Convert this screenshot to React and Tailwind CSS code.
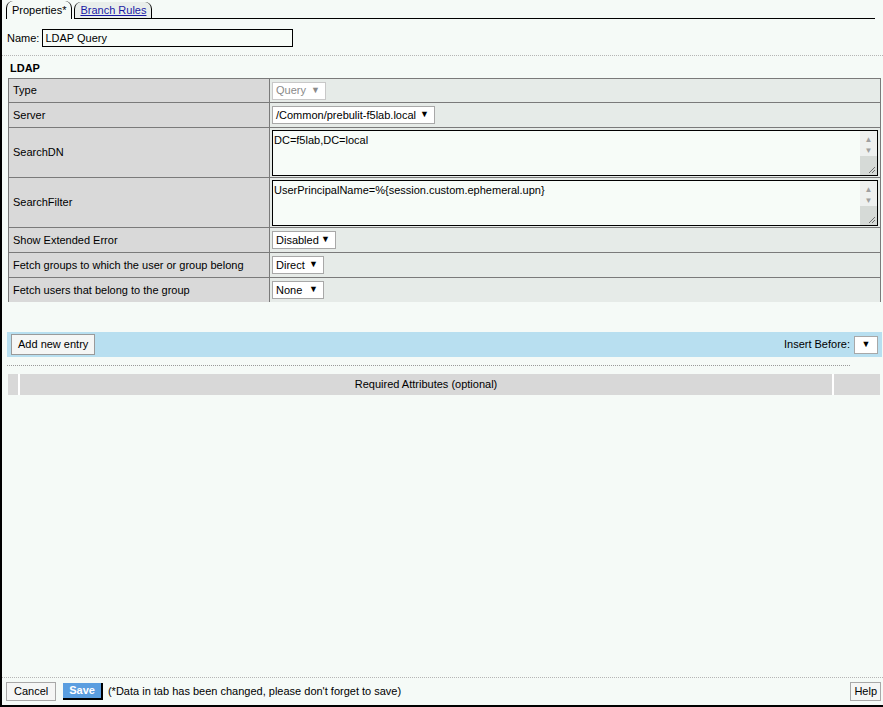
const font = { fontFamily: '"Liberation Sans", Arial, sans-serif' };

function Select({ value, width, disabled }) {
  return (
    <div
      className={`flex h-[18px] items-center justify-between whitespace-nowrap border bg-white pl-[3px] pr-[5px] ${
        disabled ? "border-[#c8c8c8] text-[#8a8a8a]" : "border-[#a8a8a8] text-black"
      } ${width}`}
    >
      <span>{value}</span>
      <span className={`text-[9px] ${disabled ? "text-[#8a8a8a]" : "text-black"}`}>▼</span>
    </div>
  );
}

function FakeTextarea({ text }) {
  return (
    <div className="flex h-[46px] flex-1 border border-black bg-[#f7fcf8]">
      <div className="flex-1 pl-[1px] pt-[2px] leading-[14px]">{text}</div>
      <div className="flex w-[17px] flex-col">
        <div className="flex flex-col items-center bg-[#eef0ef] pt-[3px] text-[8px] leading-[11px] text-[#a0a0a0]">
          <span>▲</span>
          <span>▼</span>
        </div>
        <div className="relative flex-1 bg-[#d6dad7]">
          <svg className="absolute bottom-[1px] right-[1px]" width="8" height="8" viewBox="0 0 8 8">
            <path d="M7 1 L1 7 M7 4 L4 7" stroke="#707070" strokeWidth="1" fill="none" />
          </svg>
        </div>
      </div>
    </div>
  );
}

function Row({ label, height, children, last }) {
  return (
    <div className={`flex ${height} ${last ? "" : "border-b border-[#7a7a7a]"}`}>
      <div className="flex w-[261px] items-center whitespace-nowrap border-r border-[#7a7a7a] bg-[#d9d9d9] pl-[4px]">{label}</div>
      <div className="flex flex-1 items-center bg-[#e6ebe8] px-[2px]">{children}</div>
    </div>
  );
}

export default function App() {
  return (
    <div
      style={font}
      className="flex h-[707px] w-[883px] flex-col border-b-2 border-l-2 border-black bg-[#f5faf7] text-[11px] text-black"
    >
      {/* tabs */}
      <div className="flex h-[19px] items-end pl-[4px] pr-[8px]">
        <div className="flex h-[18px] items-center rounded-t-[7px] border-x border-black px-[5px]">Properties*</div>
        <div className="ml-[2px] flex flex-1 items-end border-b border-black">
          <div className="flex h-[16px] items-center rounded-t-[7px] border-x border-black bg-[#e9eeeb] px-[5px] text-[#1a1aa6] underline">
            Branch Rules
          </div>
        </div>
      </div>

      {/* name */}
      <div className="mt-[10px] flex items-center gap-[3px] pl-[5px]">
        <span>Name:</span>
        <div className="flex h-[18px] w-[251px] items-center border border-black bg-[#f7fcf8] pl-[2px]">LDAP Query</div>
      </div>

      <div className="mt-[8px] border-t border-dotted border-[#b5b5b5]" />

      <div className="pl-[8px] pt-[5px] font-bold leading-[14px]">LDAP</div>

      {/* properties table */}
      <div className="ml-[6px] mr-[2px] mt-[3px] border-x border-t border-[#7a7a7a]">
        <Row label="Type" height="h-[24px]">
          <Select value="Query" width="w-[54px]" disabled />
        </Row>
        <Row label="Server" height="h-[25px]">
          <Select value="/Common/prebulit-f5lab.local" width="w-[163px]" />
        </Row>
        <Row label="SearchDN" height="h-[50px]">
          <FakeTextarea text="DC=f5lab,DC=local" />
        </Row>
        <Row label="SearchFilter" height="h-[50px]">
          <FakeTextarea text="UserPrincipalName=%{session.custom.ephemeral.upn}" />
        </Row>
        <Row label="Show Extended Error" height="h-[25px]">
          <Select value="Disabled" width="w-[64px]" />
        </Row>
        <Row label="Fetch groups to which the user or group belong" height="h-[25px]">
          <Select value="Direct" width="w-[52px]" />
        </Row>
        <Row label="Fetch users that belong to the group" height="h-[24px]" last>
          <Select value="None" width="w-[52px]" />
        </Row>
      </div>

      {/* add entry bar */}
      <div className="ml-[5px] mr-[1px] mt-[30px] flex h-[25px] items-center justify-between bg-[#b8dff0] px-[4px]">
        <div className="flex h-[21px] items-center border border-[#9a9a9a] bg-[#f5f6f5] px-[6px]">Add new entry</div>
        <div className="flex items-center gap-[4px]">
          <span>Insert Before:</span>
          <div className="flex h-[18px] w-[24px] items-center justify-center border border-[#a8a8a8] bg-white text-[9px]">▼</div>
        </div>
      </div>

      <div className="ml-[5px] mr-[33px] mt-[8px] border-t border-dotted border-[#9a9a9a]" />

      {/* required attributes header */}
      <div className="ml-[6px] mr-[3px] mt-[8px] flex h-[21px] bg-[#d8d8d8]">
        <div className="w-[12px] border-r-2 border-white" />
        <div className="flex flex-1 items-center justify-center border-r-2 border-white">Required Attributes (optional)</div>
        <div className="w-[46px]" />
      </div>

      <div className="flex-1" />

      {/* footer */}
      <div className="border-t border-dotted border-[#b5b5b5]" />
      <div className="flex h-[27px] items-center justify-between pl-[4px] pr-[2px]">
        <div className="flex items-center">
          <div className="flex h-[19px] items-center border border-[#a8a8a8] bg-[#f5f6f5] px-[7px]">Cancel</div>
          <div className="ml-[7px] flex h-[17px] items-center border-b-2 border-r-2 border-black bg-[#5a9ee0] px-[6px] font-bold text-white">
            Save
          </div>
          <span className="ml-[5px]">(*Data in tab has been changed, please don't forget to save)</span>
        </div>
        <div className="flex h-[19px] items-center border border-[#a8a8a8] bg-[#f5f6f5] px-[3px]">Help</div>
      </div>
    </div>
  );
}
